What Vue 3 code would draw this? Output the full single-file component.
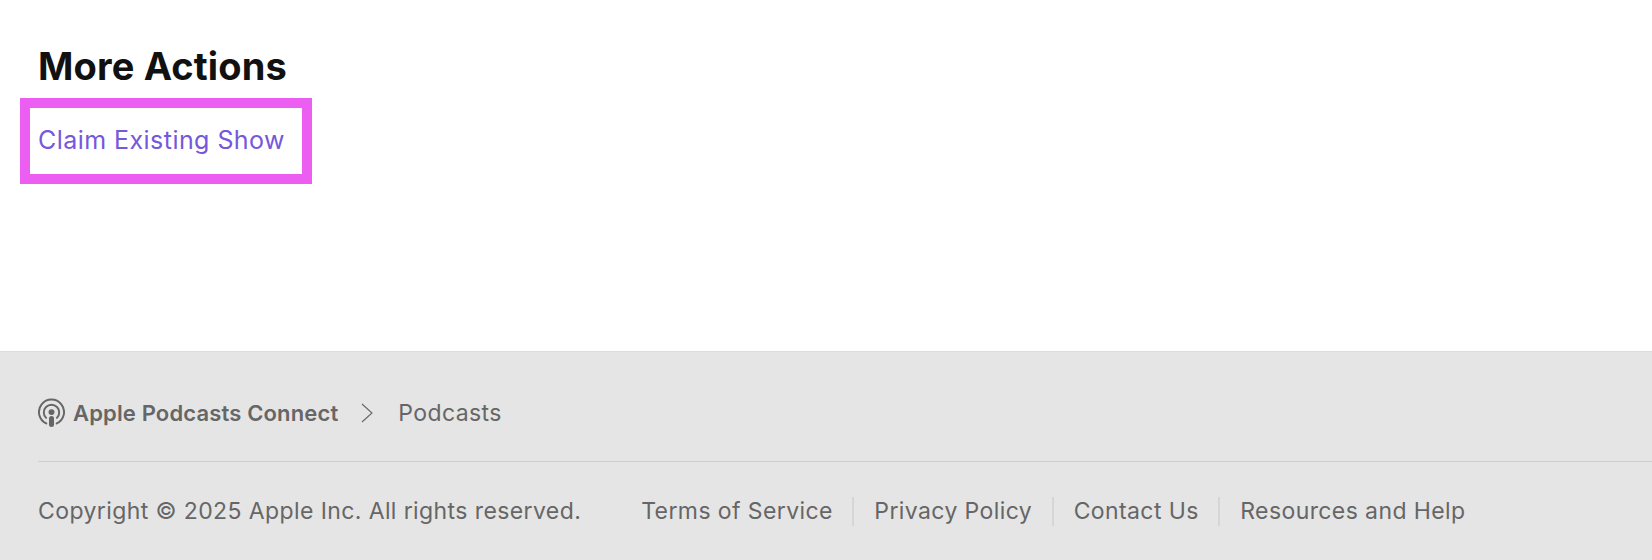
<script setup>
const links = ['Terms of Service', 'Privacy Policy', 'Contact Us', 'Resources and Help']
</script>

<template>
  <div class="page">
    <main class="main">
      <h2 class="title">More Actions</h2>
      <div class="highlight">
        <a class="claim">Claim Existing Show</a>
      </div>
    </main>
    <footer class="footer">
      <div class="crumbs">
        <svg class="logo" viewBox="0 0 28 30" width="27" height="29" fill="none" stroke="#666" stroke-linecap="round">
          <path d="M8.6 26.4A13 13 0 1 1 19.4 26.4" stroke-width="2" />
          <path d="M8.4 20.6A8 8 0 1 1 19.6 20.6" stroke-width="2" />
          <circle cx="14" cy="14.6" r="3.1" fill="#666" stroke="none" />
          <rect x="11.4" y="18.6" width="5.2" height="11.4" rx="2.6" fill="#666" stroke="none" />
        </svg>
        <span class="brand">Apple Podcasts Connect</span>
        <svg class="chev" viewBox="0 0 12 20" width="12" height="20" fill="none" stroke="#666" stroke-width="1.1">
          <path d="M1 1l10 9-10 9" />
        </svg>
        <span class="crumb">Podcasts</span>
      </div>
      <div class="legal">
        <span class="copy">Copyright © 2025 Apple Inc. All rights reserved.</span>
        <nav class="links">
          <a v-for="l in links" :key="l" class="link">{{ l }}</a>
        </nav>
      </div>
    </footer>
  </div>
</template>

<style>
html, body { margin: 0; background: #fff; }
</style>

<style scoped>
.page {
  width: 1652px;
  height: 560px;
  overflow: hidden;
  font-family: Inter, "Liberation Sans", sans-serif;
  display: flex;
  flex-direction: column;
}
.main {
  flex: none;
  height: 351px;
  box-sizing: border-box;
  padding: 44px 0 0 38px;
}
.title {
  margin: 0;
  font-size: 38px;
  line-height: 44px;
  font-weight: 700;
  letter-spacing: 0.15px;
  color: #111;
}
.highlight {
  margin: 10px 0 0 -18px;
  width: 292px;
  height: 86px;
  box-sizing: border-box;
  border: 10px solid #ec5df1;
  padding: 0 0 2px 8px;
  display: flex;
  align-items: center;
}
.claim {
  font-size: 25px;
  letter-spacing: 0.45px;
  color: #7558dc;
}
.footer {
  flex: 1;
  background: #e5e5e5;
  border-top: 1px solid #dcdcdc;
  padding-left: 38px;
  color: #666;
  font-size: 23px;
}
.crumbs {
  height: 97px;
  padding-top: 12px;
  border-bottom: 1px solid #cfcfcf;
  display: flex;
  align-items: center;
}
.logo { flex: none; }
.brand {
  margin-left: 8px;
  font-weight: 600;
  font-size: 22px;
  letter-spacing: 0.15px;
}
.chev { margin-left: 23px; }
.crumb { margin-left: 25px; letter-spacing: 0.4px; }
.legal {
  height: 97px;
  padding-top: 1px;
  display: flex;
  align-items: center;
  line-height: 29px;
  letter-spacing: 0.4px;
}
.links {
  margin-left: 60px;
  display: flex;
}
.link {
  padding: 0 19.5px 0 20px;
  border-left: 2px solid #d6d6d6;
}
.link:first-child { padding-left: 0; border-left: 0; }
</style>
